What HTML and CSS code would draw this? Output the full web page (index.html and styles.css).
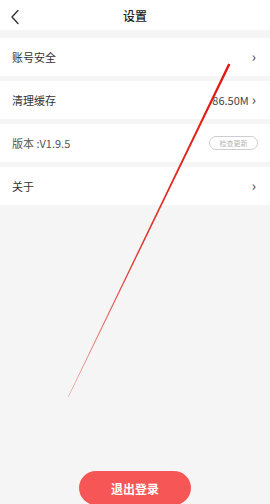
FILE: index.html
```html
<!DOCTYPE html>
<html lang="zh-CN">
<head>
  <meta charset="UTF-8" />
  <title>设置</title>
  <meta name="viewport" content="width=device-width, initial-scale=1" />
  <link rel="stylesheet" href="styles.css">
</head>
<body>

<div class="page">
  <div class="header">
    <span class="back" onclick="history.back()">
      <svg width="10" height="16" viewBox="0 0 10 16"><path d="M8 1.5 L2 8 L8 14.5" fill="none" stroke="#333" stroke-width="1.4" stroke-linecap="round" stroke-linejoin="round"/></svg>
    </span>
    <h1>设置</h1>
  </div>

  <div class="list">
    <div class="row">
      <span class="label">账号安全</span>
      <span class="arrow">›</span>
    </div>
    <div class="row">
      <span class="label">清理缓存</span>
      <span class="value">86.50M</span>
      <span class="arrow">›</span>
    </div>
    <div class="row">
      <span class="label light">版本 :V1.9.5</span>
      <span class="check-btn">检查更新</span>
    </div>
    <div class="row">
      <span class="label">关于</span>
      <span class="arrow">›</span>
    </div>
  </div>

  <div class="footer">
    <button class="logout">退出登录</button>
  </div>

  <!-- annotation stroke over the screenshot -->
  <svg class="mark" width="270" height="504" viewBox="0 0 270 504">
    <defs>
      <linearGradient id="fade" x1="229" y1="64" x2="68" y2="397" gradientUnits="userSpaceOnUse">
        <stop offset="0" stop-color="#e3150f"/>
        <stop offset="0.6" stop-color="#e2362e"/>
        <stop offset="1" stop-color="#e8a39c"/>
      </linearGradient>
    </defs>
    <polygon points="228.2,63.5 230.4,64.6 68.6,397 67.9,397" fill="url(#fade)"/>
  </svg>
</div>

</body>
</html>
```

FILE: styles.css
```css
* { box-sizing: border-box; font-family: 'Noto Sans CJK SC', 'Noto Sans', sans-serif; }
body {
  margin: 0;
  background: #f5f5f5;
}
.page {
  position: relative;
  width: 270px;
  height: 504px;
  overflow: hidden;
  display: flex;
  flex-direction: column;
}
.header {
  height: 30px;
  background: #fff;
  display: flex;
  align-items: center;
  justify-content: center;
  position: relative;
}
.back {
  position: absolute;
  left: 10px;
  top: 6px;
  cursor: pointer;
}
.header h1 {
  margin: 0;
  font-size: 12px;
  font-weight: 500;
  color: #222;
}
.list {
  margin-top: 8px;
  display: flex;
  flex-direction: column;
  gap: 5px;
}
.row {
  height: 38px;
  background: #fff;
  display: flex;
  align-items: center;
  padding: 0 14px 0 12px;
}
.label {
  flex: 1;
  font-size: 11px;
  color: #333;
}
.label.light {
  color: #555;
}
.value {
  font-size: 11px;
  color: #444;
  margin-right: 3px;
}
.arrow {
  font-size: 14px;
  color: #333;
  line-height: 1;
  margin-top: -2px;
}
.check-btn {
  width: 49px;
  height: 14px;
  border: 1px solid #cfcfcf;
  border-radius: 7px;
  font-size: 7px;
  line-height: 12px;
  color: #b5b5b5;
  text-align: center;
  margin-right: -2px;
}
.footer {
  margin-top: auto;
  display: flex;
  justify-content: center;
  height: 33px;
}
.logout {
  width: 112px;
  height: 34px;
  border: none;
  border-radius: 17px;
  background: #f65656;
  color: #fff;
  font-size: 12px;
  font-weight: 700;
  padding: 0;
  cursor: pointer;
}
.mark {
  position: absolute;
  left: 0;
  top: 0;
  pointer-events: none;
}
```
